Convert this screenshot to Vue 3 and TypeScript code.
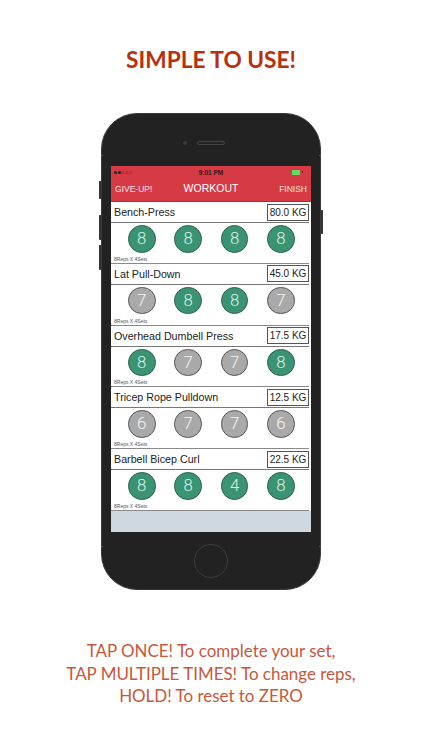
<script setup lang="ts">
interface SetItem { reps: number; done: boolean }
interface Exercise { name: string; weight: string; sets: SetItem[] }
const mk = (reps: number[], done: boolean[]): SetItem[] =>
  reps.map((r, i) => ({ reps: r, done: done[i] }))
const exercises: Exercise[] = [
  { name: 'Bench-Press', weight: '80.0 KG', sets: mk([8, 8, 8, 8], [true, true, true, true]) },
  { name: 'Lat Pull-Down', weight: '45.0 KG', sets: mk([7, 8, 8, 7], [false, true, true, false]) },
  { name: 'Overhead Dumbell Press', weight: '17.5 KG', sets: mk([8, 7, 7, 8], [true, false, false, true]) },
  { name: 'Tricep Rope Pulldown', weight: '12.5 KG', sets: mk([6, 7, 7, 6], [false, false, false, false]) },
  { name: 'Barbell Bicep Curl', weight: '22.5 KG', sets: mk([8, 8, 4, 8], [true, true, true, true]) },
]
</script>

<template>
  <main class="page">
    <h1 class="headline">SIMPLE TO USE!</h1>
    <div class="phone">
      <span class="side side-mute"></span>
      <span class="side side-up"></span>
      <span class="side side-down"></span>
      <span class="side side-power"></span>
      <span class="band band-tl"></span>
      <span class="band band-tr"></span>
      <span class="band band-bl"></span>
      <span class="band band-br"></span>
      <div class="earpiece">
        <span class="camera"></span>
        <span class="speaker"></span>
      </div>
      <div class="screen">
        <div class="status">
          <span class="signal"><i></i><i></i><i class="off"></i><i class="off"></i><i class="off"></i></span>
          <span class="clock">9:01 PM</span>
          <span class="battery"><b></b></span>
        </div>
        <div class="nav">
          <span class="nav-btn">GIVE-UP!</span>
          <span class="nav-title">WORKOUT</span>
          <span class="nav-btn nav-right">FINISH</span>
        </div>
        <section v-for="ex in exercises" :key="ex.name" class="exercise">
          <div class="ex-head">
            <span class="ex-name">{{ ex.name }}</span>
            <span class="ex-weight">{{ ex.weight }}</span>
          </div>
          <div class="ex-sets">
            <span
              v-for="(s, i) in ex.sets"
              :key="i"
              class="set"
              :class="{ done: s.done }"
            >{{ s.reps }}</span>
          </div>
          <div class="ex-note">8Reps X 4Sets</div>
        </section>
        <div class="filler"></div>
      </div>
      <div class="home"></div>
    </div>
    <p class="caption">
      TAP ONCE! To complete your set,<br />
      TAP MULTIPLE TIMES! To change reps,<br />
      HOLD! To reset to ZERO
    </p>
  </main>
</template>

<style scoped>
.page {
  width: 422px;
  height: 750px;
  background: #fff;
  display: flex;
  flex-direction: column;
  align-items: center;
  overflow: hidden;
  font-family: "Lato", "Liberation Sans", sans-serif;
}
.headline {
  margin: 46px 0 0;
  height: 67px;
  font-family: "Lato", sans-serif;
  font-size: 22.7px;
  line-height: 28px;
  font-weight: 700;
  color: #b8300e;
}
.phone {
  position: relative;
  width: 220px;
  height: 477px;
  flex: none;
  box-sizing: border-box;
  padding: 52px 9px 0;
  background: #222;
  border-radius: 36px;
  border: 1px solid #3a3a3a;
  display: flex;
  flex-direction: column;
  align-items: center;
}
.side {
  position: absolute;
  width: 2px;
  background: #333;
}
.side-mute { left: -3px; top: 67px; height: 18px; border-radius: 1px 0 0 1px; }
.side-up { left: -3px; top: 101px; height: 25px; border-radius: 1px 0 0 1px; }
.side-down { left: -3px; top: 131px; height: 25px; border-radius: 1px 0 0 1px; }
.side-power { right: -3px; top: 96px; height: 24px; border-radius: 0 1px 1px 0; }
.band {
  position: absolute;
  width: 2px;
  height: 1px;
  background: #555;
}
.band-tl { left: -1px; top: 41px; }
.band-tr { right: -1px; top: 41px; }
.band-bl { left: -1px; bottom: 42px; }
.band-br { right: -1px; bottom: 42px; }
.earpiece {
  position: absolute;
  top: 27px;
  left: 81px;
  display: flex;
  align-items: center;
  gap: 10px;
}
.camera {
  width: 4px;
  height: 4px;
  border-radius: 50%;
  background: #3b3b3b;
}
.speaker {
  width: 26px;
  height: 2px;
  border-radius: 2px;
  border: 1px solid #444;
}
.screen {
  width: 200px;
  height: 366px;
  flex: none;
  background: #fff;
  display: flex;
  flex-direction: column;
  overflow: hidden;
  color: #222;
}
.status {
  height: 12px;
  flex: none;
  background: #d63b45;
  display: flex;
  align-items: center;
  justify-content: space-between;
  padding: 0 8px 0 3px;
  position: relative;
}
.signal { display: flex; gap: 0.7px; }
.signal i {
  width: 3px;
  height: 3px;
  border-radius: 50%;
  background: #222;
}
.signal i.off { background: transparent; box-shadow: inset 0 0 0 0.5px #8a2d35; }
.clock {
  position: absolute;
  left: 0;
  right: 0;
  text-align: center;
  font-family: "Liberation Sans", sans-serif;
  font-size: 6.5px;
  font-weight: 700;
  color: #3a1216;
}
.battery {
  position: relative;
  width: 11px;
  height: 5px;
  display: flex;
}
.battery b { width: 8px; background: #62dc62; }
.battery::after {
  content: "";
  position: absolute;
  right: 0;
  top: 1.5px;
  width: 1px;
  height: 2px;
  background: #4a1a1e;
}
.nav {
  height: 24px;
  flex: none;
  box-sizing: border-box;
  background: #d63b45;
  border-bottom: 1px solid #a8323a;
  display: grid;
  grid-template-columns: 1fr auto 1fr;
  align-items: center;
  padding: 0 4px 4px;
  font-family: "Liberation Sans", sans-serif;
  color: #fbe4e5;
}
.nav-btn { font-size: 8.5px; padding-top: 2px; }
.nav-right { text-align: right; }
.nav-title { font-size: 10.5px; color: #fff; }
.exercise {
  height: 61.75px;
  flex: none;
  box-sizing: border-box;
  display: flex;
  flex-direction: column;
  border-bottom: 1px solid #8a8a8a;
  margin-right: 2px;
  padding-top: 1px;
}
.ex-head {
  height: 20px;
  flex: none;
  box-sizing: border-box;
  border-bottom: 1px solid #777;
  display: flex;
  align-items: center;
  justify-content: space-between;
  padding: 0 0 1px 3px;
  font-family: "Liberation Sans", sans-serif;
}
.ex-name { font-size: 10.7px; }
.ex-weight {
  box-sizing: border-box;
  width: 42px;
  height: 17px;
  border: 1px solid #555;
  font-size: 10px;
  line-height: 15px;
  text-align: center;
}
.ex-sets {
  flex: 1;
  display: flex;
  gap: 18.9px;
  padding: 2px 0 0 17px;
  align-items: flex-start;
}
.set {
  width: 27.5px;
  height: 27.5px;
  flex: none;
  border-radius: 50%;
  box-sizing: border-box;
  border: 1px solid #555;
  background: #a9a9a9;
  color: #f6f6f6;
  text-align: center;
  font-family: "Roboto", sans-serif;
  font-weight: 300;
  font-size: 16.8px;
  line-height: 25px;
}
.set.done {
  background: #3a9473;
  border-color: #2f5f4c;
  color: #dcf3e8;
}
.ex-note {
  height: 7px;
  font-size: 5px;
  line-height: 6px;
  padding-left: 3px;
  color: #555;
  font-family: "Liberation Sans", sans-serif;
}
.filler {
  flex: 1;
  background: #cfd8de;
}
.home {
  position: absolute;
  left: 92px;
  bottom: 11px;
  width: 34px;
  height: 34px;
  box-sizing: border-box;
  border-radius: 50%;
  border: 1px solid #3d3d3d;
}
.caption {
  margin: 50px 0 0;
  text-align: center;
  font-family: "Lato", sans-serif;
  font-weight: 400;
  font-size: 16.95px;
  line-height: 22.5px;
  color: #c8573a;
}
</style>
